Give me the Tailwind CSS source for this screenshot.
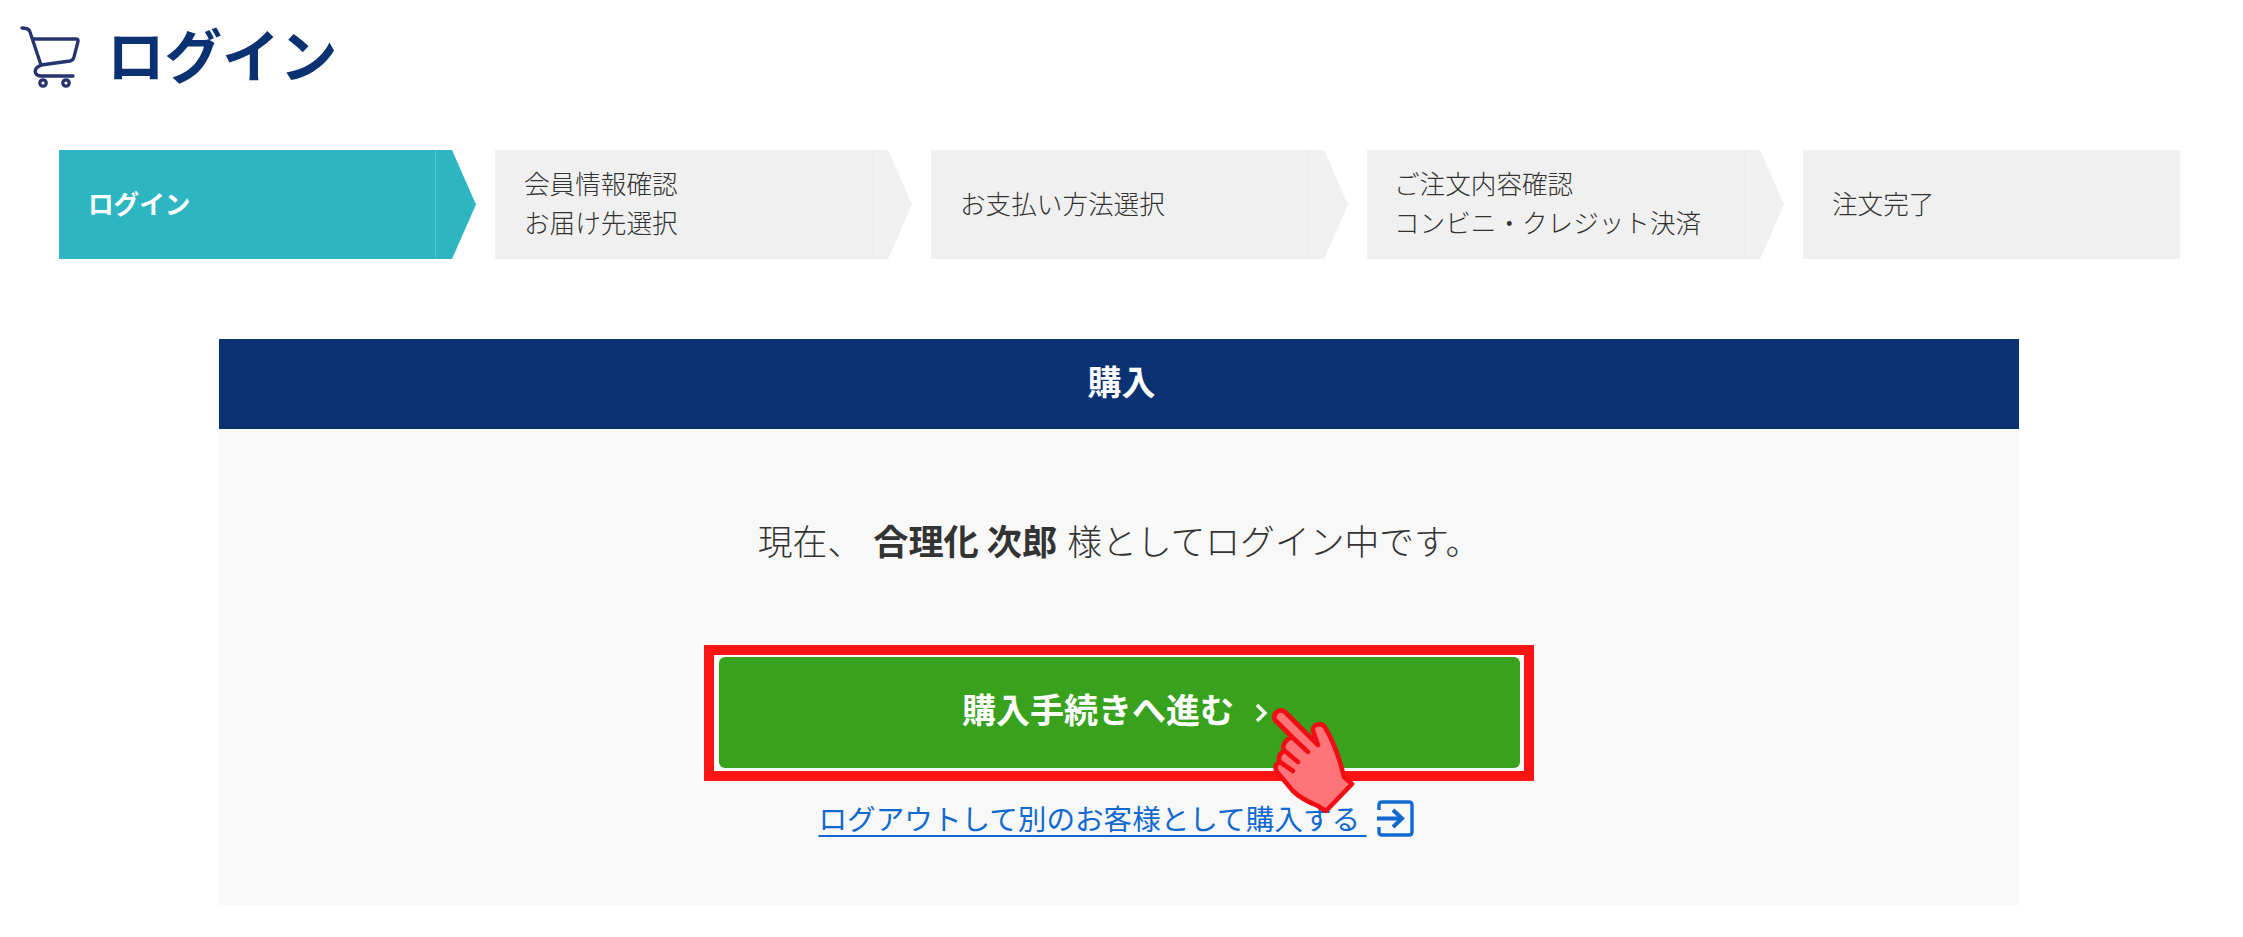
<!DOCTYPE html>
<html lang="ja">
<head>
<meta charset="utf-8">
<title>ログイン</title>
<script src="https://cdn.jsdelivr.net/npm/@tailwindcss/browser@4"></script>
</head>
<body class="bg-white font-['Noto_Sans_CJK_JP','Noto_Sans',sans-serif] text-[#333]">
<div class="w-[2243px] h-[937px] overflow-hidden">
  <header class="flex items-center h-[114px] pl-[16px] gap-[21px]">
    <svg class="w-[70px] h-[75px]" viewBox="0 0 70 75" fill="none" stroke="#26346f" stroke-width="3.3" stroke-linecap="round" stroke-linejoin="round">
      <path d="M6 8 L10 8.5 Q13 9 14 12 L25 45 L21 47.5 Q18.5 50 19.5 53 Q21 56 25 56 L57 56"/>
      <path d="M17 19 H60 Q62.5 19 62 21.5 L58 37 Q57 40.5 54 41 L25 45"/>
      <circle cx="27" cy="63" r="3.2"/>
      <circle cx="50" cy="63" r="3.2"/>
    </svg>
    <h1 class="text-[57.6px] leading-none font-bold text-[#0a3172] -mt-[6px]">ログイン</h1>
  </header>
  <ol class="flex pl-[59px] gap-[19px] mt-[36px] text-[25.6px] leading-[39px] font-light">
    <li class="relative w-[417px] h-[109px] flex items-center pl-[29px] pb-[5px] bg-[#2db6c2] text-white font-bold [clip-path:polygon(0_0,393px_0,417px_50%,393px_100%,0_100%)]"><span>ログイン</span><span class="absolute left-[376px] top-0 h-full w-px bg-white/20"></span></li>
    <li class="relative w-[417px] h-[109px] flex items-center pl-[29px] pb-[5px] bg-[#f0f0f0] [clip-path:polygon(0_0,393px_0,417px_50%,393px_100%,0_100%)]"><span>会員情報確認<br>お届け先選択</span><span class="absolute left-[377px] top-0 h-full w-px bg-black/[0.015]"></span></li>
    <li class="relative w-[417px] h-[109px] flex items-center pl-[29px] pb-[5px] bg-[#f0f0f0] [clip-path:polygon(0_0,393px_0,417px_50%,393px_100%,0_100%)]"><span>お支払い方法選択</span><span class="absolute left-[377px] top-0 h-full w-px bg-black/[0.015]"></span></li>
    <li class="relative w-[417px] h-[109px] flex items-center pl-[27px] pb-[5px] bg-[#f0f0f0] [clip-path:polygon(0_0,393px_0,417px_50%,393px_100%,0_100%)]"><span>ご注文内容確認<br>コンビニ・クレジット決済</span><span class="absolute left-[377px] top-0 h-full w-px bg-black/[0.015]"></span></li>
    <li class="w-[377px] h-[109px] flex items-center pl-[29px] pb-[5px] bg-[#f0f0f0]">注文完了</li>
  </ol>
  <section class="ml-[219px] w-[1800px] mt-[80px]">
    <h2 class="h-[90px] flex items-center justify-center pb-[8px] pl-[5px] bg-[#0a3172] text-white text-[34px] font-bold">購入</h2>
    <div class="h-[476px] bg-[#f8f8f8] flex flex-col items-center">
      <p class="mt-[86px] text-[34.8px] leading-[50px] font-light">現在、<strong class="font-bold text-[35.2px] ml-[11px] mr-[10px]">合理化 次郎</strong>様としてログイン中です。</p>
      <div class="relative mt-[92px]">
        <a class="flex items-center justify-center w-[801px] h-[111px] pr-[8px] rounded-[6px] bg-[#38a11e] text-white text-[34px] font-bold shadow-[0_0_0_5px_#fff]">
          <span class="-mt-[8px]">購入手続きへ進む</span>
          <svg class="w-[14px] h-[20px] ml-[20px]" viewBox="0 0 14 20" fill="none" stroke="#fff" stroke-width="3.4"><path d="M3 2 L11 10 L3 18"/></svg>
        </a>
        <div class="absolute -left-[15px] -top-[12px] w-[830px] h-[136px] border-[10px] border-[#fb1414] pointer-events-none"></div>
        <svg class="absolute left-[547px] top-[43px] w-[100px] h-[120px]" viewBox="0 0 100 120" fill="#ff7479" stroke="#f20d15" stroke-width="4.6" stroke-linejoin="round" stroke-linecap="round">
          <path d="M9 20 C6 13 14 8 19 12 L52 45 L47 31 C46 24 56 21 60 29 C68 43 74 60 78 77 L86 84 L60 111 L52 106 C40 101 33 97 27 91 L11 72 C8 67 10 63 14 62 C12 58 13 54 18 51 C16 47 18 40 26 37 Z"/>
          <path d="M26 37 L42 52 M19 51 L32 62 M14 62 L27 71" fill="none"/>
        </svg>
      </div>
      <a class="mt-[30px] flex items-center pr-[5px] text-[28.6px] leading-[40px] text-[#1169d0]">
        <span class="underline decoration-[2px] underline-offset-[5px]">ログアウトして別のお客様として購入する&nbsp;</span>
        <svg class="ml-[11px] w-[37px] h-[37px]" viewBox="0 0 37 37" fill="none" stroke="#1169d0" stroke-width="3.4"><path d="M2 10 V5 Q2 2 5 2 H32 Q35 2 35 5 V32 Q35 35 32 35 H5 Q2 35 2 32 V27" /><path d="M0 18.5 H24 M16 10 L25 18.5 L16 27" stroke-width="4"/></svg>
      </a>
    </div>
  </section>
</div>
</body>
</html>
